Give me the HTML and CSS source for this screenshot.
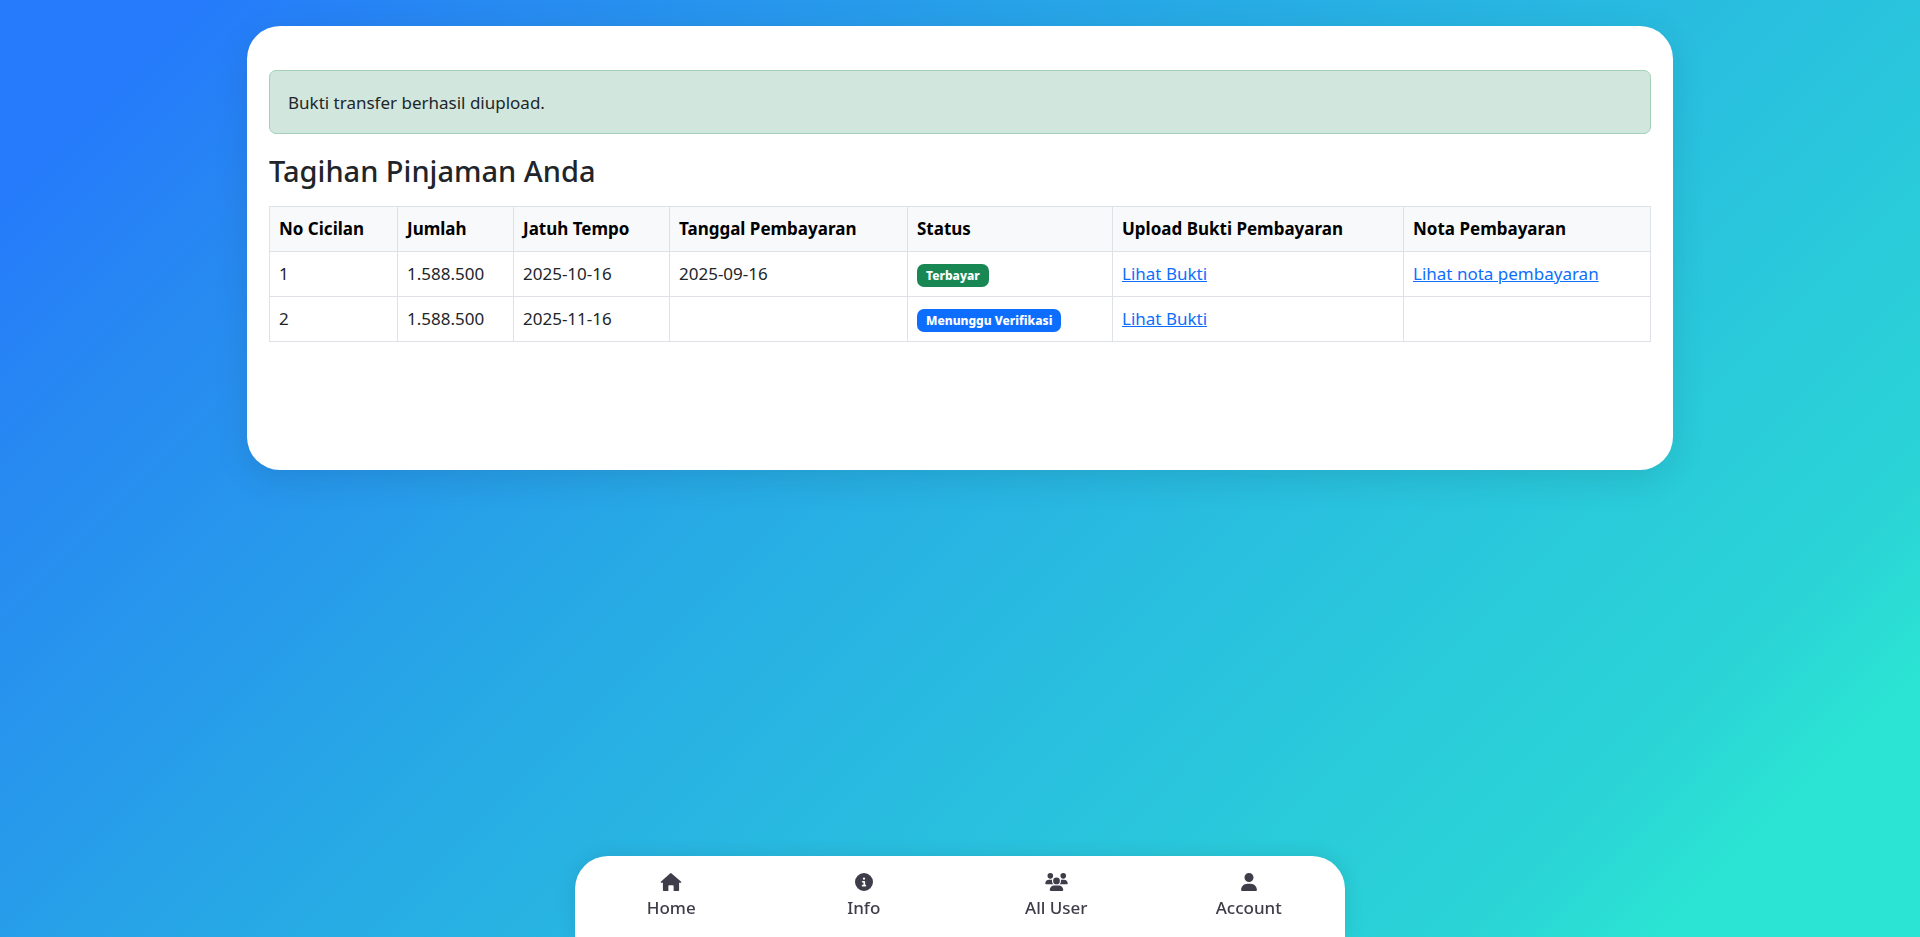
FILE: index.html
```html
<!DOCTYPE html>
<html lang="id">
<head>
  <meta charset="UTF-8">
  <meta name="viewport" content="width=device-width, initial-scale=1.0">
  <title>Tagihan Pinjaman</title>
  <link rel="stylesheet" href="styles.css">
</head>
<body>
  <main class="container">
    <div class="alert" role="alert">Bukti transfer berhasil diupload.</div>

    <h3>Tagihan Pinjaman Anda</h3>

    <table class="table">
      <colgroup>
        <col class="col-no">
        <col class="col-jumlah">
        <col class="col-tempo">
        <col class="col-tanggal">
        <col class="col-status">
        <col class="col-bukti">
        <col class="col-nota">
      </colgroup>
      <thead>
        <tr>
          <th>No Cicilan</th>
          <th>Jumlah</th>
          <th>Jatuh Tempo</th>
          <th>Tanggal Pembayaran</th>
          <th>Status</th>
          <th>Upload Bukti Pembayaran</th>
          <th>Nota Pembayaran</th>
        </tr>
      </thead>
      <tbody>
        <tr>
          <td>1</td>
          <td>1.588.500</td>
          <td>2025-10-16</td>
          <td>2025-09-16</td>
          <td><span class="badge bg-success">Terbayar</span></td>
          <td><a href="#">Lihat Bukti</a></td>
          <td><a href="#">Lihat nota pembayaran</a></td>
        </tr>
        <tr>
          <td>2</td>
          <td>1.588.500</td>
          <td>2025-11-16</td>
          <td></td>
          <td><span class="badge bg-primary">Menunggu Verifikasi</span></td>
          <td><a href="#">Lihat Bukti</a></td>
          <td></td>
        </tr>
      </tbody>
    </table>
  </main>

  <!-- Navigasi bawah -->
  <nav class="bottom-nav">
    <a href="#">
      <svg width="22" height="18" viewBox="0 0 600 512"><path d="M300 0 L590 250 Q600 262 586 280 H530 V490 Q530 512 508 512 H375 V370 Q375 345 350 345 H250 Q225 345 225 370 V512 H92 Q70 512 70 490 V280 H14 Q0 262 10 250 L280 10 Q290 0 300 0z"/></svg>
      <span>Home</span>
    </a>
    <a href="#">
      <svg width="18" height="18" viewBox="0 0 512 512"><path d="M256 512a256 256 0 1 0 0-512 256 256 0 1 0 0 512zM216 336h24v-64h-24c-13.300 0-24-10.700-24-24s10.700-24 24-24h48c13.300 0 24 10.700 24 24v88h8c13.300 0 24 10.700 24 24s-10.700 24-24 24h-80c-13.300 0-24-10.700-24-24s10.700-24 24-24zm40-208a32 32 0 1 1 0 64 32 32 0 1 1 0-64z"/></svg>
      <span>Info</span>
    </a>
    <a href="#">
      <svg width="23" height="18" viewBox="0 0 640 512"><path d="M144 0a80 80 0 1 1 0 160 80 80 0 1 1 0-160zm368 0a80 80 0 1 1 0 160 80 80 0 1 1 0-160zM0 298.700C0 239.800 47.800 192 106.700 192h42.700c15.900 0 31 3.500 44.600 9.700-1.300 7.200-1.900 14.700-1.900 22.300 0 38.200 16.800 72.500 43.300 96H21.300C9.600 320 0 310.400 0 298.700zM405.300 320h-.7c26.600-23.500 43.300-57.800 43.300-96 0-7.600-.7-15-1.900-22.300 13.600-6.300 28.700-9.700 44.600-9.700h42.700C592.200 192 640 239.800 640 298.700c0 11.800-9.600 21.300-21.300 21.300H405.300zM224 224a96 96 0 1 1 192 0 96 96 0 1 1-192 0zM128 485.300C128 411.700 187.700 352 261.300 352h117.400C452.300 352 512 411.700 512 485.300c0 14.700-11.900 26.700-26.700 26.700H154.700c-14.700 0-26.700-11.900-26.700-26.700z"/></svg>
      <span>All User</span>
    </a>
    <a href="#">
      <svg width="16" height="18" viewBox="0 0 448 512"><path d="M224 256a128 128 0 1 0 0-256 128 128 0 1 0 0 256zm-45.700 48C79.800 304 0 383.800 0 482.300 0 498.700 13.300 512 29.700 512h388.600c16.400 0 29.700-13.300 29.700-29.700C448 383.800 368.200 304 269.700 304h-91.400z"/></svg>
      <span>Account</span>
    </a>
  </nav>
</body>
</html>
```
FILE: styles.css
```css
* { box-sizing: border-box; }

body {
  margin: 0;
  min-height: 100vh;
  padding: 26px 16px 120px;
  font-family: "Segoe UI", "Noto Sans", sans-serif;
  font-size: 17px;
  line-height: 26px;
  color: #212529;
  background: linear-gradient(135deg, #257bfb 7%, #2788f2 16%, #27aae5 42%, #29c2de 65%, #2ad4d6 84%, #2be4d3 91%) fixed;
}

.container {
  max-width: 1426px;
  min-height: 444px;
  margin: 0 auto;
  padding: 44px 22px;
  background: #fff;
  border-radius: 33px;
  box-shadow: 0 9px 35px rgba(0, 0, 0, 0.1);
}

.alert {
  padding: 19px 18px 17px;
  margin-bottom: 18px;
  background: #d1e7dd;
  border: 1px solid #a3cfbb;
  border-radius: 7px;
}

h3 {
  margin: 0 0 16px;
  font-size: 29px;
  line-height: 38px;
  font-weight: 500;
}

.table {
  width: 100%;
  table-layout: fixed;
  border-collapse: collapse;
}
.col-no { width: 128px; }
.col-jumlah { width: 116px; }
.col-tempo { width: 156px; }
.col-tanggal { width: 238px; }
.col-status { width: 205px; }
.col-bukti { width: 291px; }
.col-nota { width: 247px; }

th, td {
  height: 45px;
  padding: 9px;
  text-align: left;
  border: 1px solid #dee2e6;
}
th {
  color: #000;
  background: #f8f9fa;
}
td a { color: #0d6efd; }

.badge {
  display: inline-block;
  padding: 5px 9px;
  font-size: 12px;
  line-height: 13px;
  font-weight: 800;
  color: #fff;
  border-radius: 7px;
  vertical-align: middle;
}
.bg-success { background: #198754; }
.bg-primary { background: #0d6efd; }

.bottom-nav {
  position: fixed;
  bottom: 0;
  left: 50%;
  transform: translateX(-50%);
  display: flex;
  width: 100%;
  max-width: 770px;
  padding: 17px 0 16px;
  background: #fff;
  border-radius: 33px 33px 0 0;
  box-shadow: 0 0 20px rgba(0, 0, 0, 0.1);
}
.bottom-nav a {
  flex: 1;
  display: flex;
  flex-direction: column;
  align-items: center;
  gap: 4px;
  font-weight: 500;
  color: #3f3d49;
  text-decoration: none;
}
.bottom-nav svg { fill: currentColor; }
```
